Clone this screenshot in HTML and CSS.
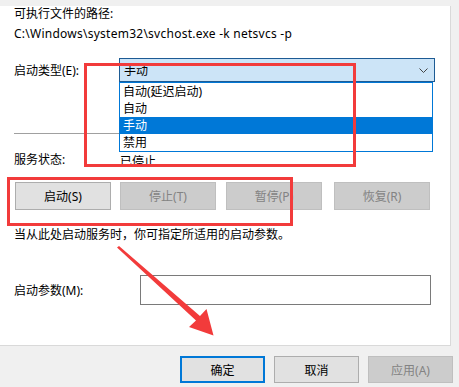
FILE: index.html
```html
<!DOCTYPE html>
<html lang="zh-CN">
<head>
    <meta charset="UTF-8">
    <title>服务属性</title>
    <link rel="stylesheet" href="styles.css">
</head>
<body>
    <div class="panel">
        <div class="line first">可执行文件的路径:</div>
        <div class="line path">C:\Windows\system32\svchost.exe -k netsvcs -p</div>

        <!-- 启动类型 -->
        <div class="row combo-row">
            <span class="label">启动类型(E):</span>
            <div class="combo">
                <span>手动</span>
                <svg class="chevron" width="9" height="5" viewBox="0 0 9 5"><path d="M0.5 0.5 L4.5 4.5 L8.5 0.5" fill="none" stroke="#444" stroke-width="1"/></svg>
                <ul class="list">
                    <li>自动(延迟启动)</li>
                    <li>自动</li>
                    <li class="selected">手动</li>
                    <li>禁用</li>
                </ul>
            </div>
        </div>

        <div class="separator"></div>

        <div class="row status-row">
            <span class="label">服务状态:</span>
            <span class="status">已停止</span>
        </div>

        <div class="buttons">
            <button class="btn">启动(S)</button>
            <button class="btn disabled">停止(T)</button>
            <button class="btn disabled">暂停(P)</button>
            <button class="btn disabled">恢复(R)</button>
        </div>

        <div class="line hint">当从此处启动服务时，你可指定所适用的启动参数。</div>

        <div class="row param-row">
            <span class="label">启动参数(M):</span>
            <div class="input"></div>
        </div>

        <!-- 标注 -->
        <div class="mark mark-combo"></div>
        <div class="mark mark-buttons"></div>
        <svg class="arrow" width="459" height="387" viewBox="0 0 459 387">
            <polygon points="117,241.5 196,314.5 189,321 213.5,329.5 206.5,303 200,310 119,240" fill="#f23b3b"/>
        </svg>
    </div>

    <div class="footer">
        <button class="btn default">确定</button>
        <button class="btn">取消</button>
        <button class="btn disabled">应用(A)</button>
    </div>
</body>
</html>
```

FILE: styles.css
```css
body {
    margin: 0;
    width: 459px;
    height: 387px;
    overflow: hidden;
    background-color: #f0f0f0;
    font-family: "Noto Sans", "Noto Sans CJK SC", sans-serif;
    font-size: 12px;
    color: #000000;
}
.panel {
    position: relative;
    width: 436px;
    height: 339px;
    padding-left: 14px;
    background: #ffffff;
    border-right: 1px solid #d9d9d9;
    border-bottom: 1px solid #d9d9d9;
}
.line {
    height: 16px;
    line-height: 16px;
    margin-top: 4px;
    white-space: nowrap;
}
.line.first {
    margin-top: 6px;
}
.line.path {
    letter-spacing: 0.25px;
}
.row {
    display: flex;
    align-items: center;
}
.label {
    width: 105px;
    flex-shrink: 0;
}
.combo-row {
    margin-top: 16px;
}
.combo {
    position: relative;
    width: 310px;
    height: 22px;
    padding-left: 4px;
    box-sizing: content-box;
    display: flex;
    align-items: center;
    justify-content: space-between;
    background: #cce4f7;
    border: 1px solid #1d5b94;
}
.chevron {
    margin-right: 6px;
}
.list {
    position: absolute;
    left: -1px;
    top: 23px;
    width: 312px;
    margin: 0;
    padding: 0;
    list-style: none;
    background: #ffffff;
    border: 1px solid #0078d7;
    z-index: 2;
}
.list li {
    height: 17px;
    line-height: 17px;
    padding-left: 3px;
}
.list li.selected {
    background: #0078d7;
    color: #ffffff;
}
.separator {
    height: 1px;
    width: 416px;
    margin-top: 51px;
    background: #a0a0a0;
}
.status-row {
    margin-top: 17px;
    height: 16px;
}
.status {
    margin-left: 1px;
    padding-top: 3px;
}
.buttons {
    display: flex;
    gap: 9px;
    margin-top: 15px;
    padding-left: 1px;
}
.btn {
    width: 96px;
    height: 28px;
    padding: 0;
    font: inherit;
    color: #000000;
    background: #e1e1e1;
    border: 1px solid #adadad;
}
.btn.disabled {
    background: #cccccc;
    border-color: #bfbfbf;
    color: #838383;
}
.buttons .btn:nth-child(3) {
    margin-left: 1px;
}
.buttons .btn:nth-child(4) {
    margin-left: 3px;
}
.hint {
    margin-top: 17px;
}
.param-row {
    margin-top: 32px;
}
.label + .input {
    margin-left: 21px;
}
.input {
    width: 289px;
    height: 28px;
    border: 1px solid #7a7a7a;
}
.mark {
    position: absolute;
    border: 3px solid #f23b3b;
    z-index: 3;
}
.mark-combo {
    left: 84px;
    top: 57px;
    width: 266px;
    height: 98px;
}
.mark-buttons {
    left: 7px;
    top: 171px;
    width: 280px;
    height: 43px;
}
.arrow {
    position: absolute;
    left: 0;
    top: 0;
    z-index: 4;
}
.footer {
    display: flex;
    justify-content: flex-end;
    gap: 9px;
    padding-top: 10px;
    padding-right: 6px;
}
.footer .btn {
    width: 85px;
    height: 27px;
}
.footer .btn.default {
    border: 2px solid #0078d7;
}
```
